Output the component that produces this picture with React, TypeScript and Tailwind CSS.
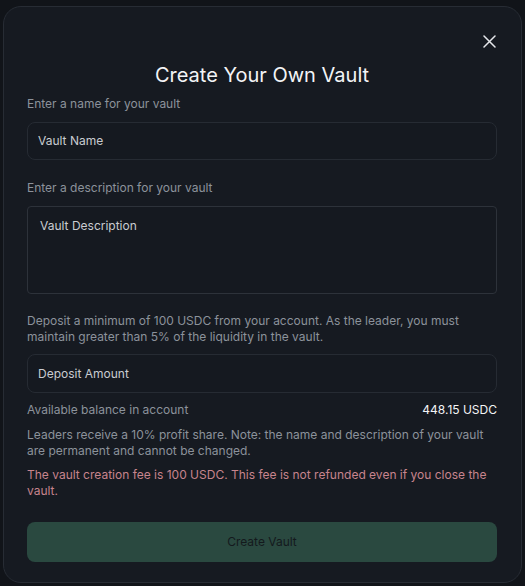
import React from "react";

export default function App() {
  return (
    <div
      className="w-[525px] h-[586px] bg-[#111419] pt-[6px] px-[3px]"
      style={{ fontFamily: "Inter, 'Noto Sans', sans-serif" }}
    >
      <div className="relative h-[577px] rounded-[18px] border border-[#272c34] bg-[#161a21] pl-[23px] pr-6 pt-[54px]">
        <button className="absolute right-[24px] top-[26px] w-[16px] h-[16px] flex items-center justify-center text-[#e5e7eb]">
          <svg width="13" height="13" viewBox="0 0 13 13" fill="none" stroke="currentColor" strokeWidth="1.5" strokeLinecap="round">
            <path d="M1 1L12 12M12 1L1 12" />
          </svg>
        </button>
        <h1 className="text-center text-[20px] leading-7 text-[#f3f4f6] font-normal">Create Your Own Vault</h1>

        <p className="mt-[7px] text-[12px] leading-4 text-[#8c929b]">Enter a name for your vault</p>
        <div className="mt-[10px] h-[38px] rounded-lg border border-[#262b33] bg-[#151920] px-[10px] flex items-center text-[12px] text-[#c9ccd1]">
          Vault Name
        </div>

        <p className="mt-[20px] text-[12px] leading-4 text-[#8c929b]">Enter a description for your vault</p>
        <div className="mt-[10px] h-[88px] rounded-[4px] border border-[#2d323a] bg-[#151920] px-[12px] pt-[11px] text-[12px] leading-4 text-[#c9ccd1]">
          Vault Description
        </div>

        <p className="mt-[19px] text-[12px] leading-4 text-[#8c929b]">
          Deposit a minimum of 100 USDC from your account. As the leader, you must maintain greater than 5% of the liquidity in the vault.
        </p>
        <div className="mt-[9px] h-[39px] rounded-lg border border-[#262b33] bg-[#151920] px-[10px] flex items-center text-[12px] text-[#c9ccd1]">
          Deposit Amount
        </div>

        <div className="mt-[9px] flex justify-between text-[12px] leading-4">
          <span className="text-[#8c929b]">Available balance in account</span>
          <span className="text-[#f3f4f6]">448.15 USDC</span>
        </div>

        <p className="mt-[9px] text-[12px] leading-4 text-[#8c929b]">
          Leaders receive a 10% profit share. Note: the name and description of your vault are permanent and cannot be changed.
        </p>
        <p className="mt-[8px] text-[12px] leading-4 text-[#c7848d]">
          The vault creation fee is 100 USDC. This fee is not refunded even if you close the vault.
        </p>

        <button className="mt-[23px] w-full h-[40px] rounded-lg bg-[#2a4940] text-[12px] text-[#14191d]">
          Create Vault
        </button>
      </div>
    </div>
  );
}
